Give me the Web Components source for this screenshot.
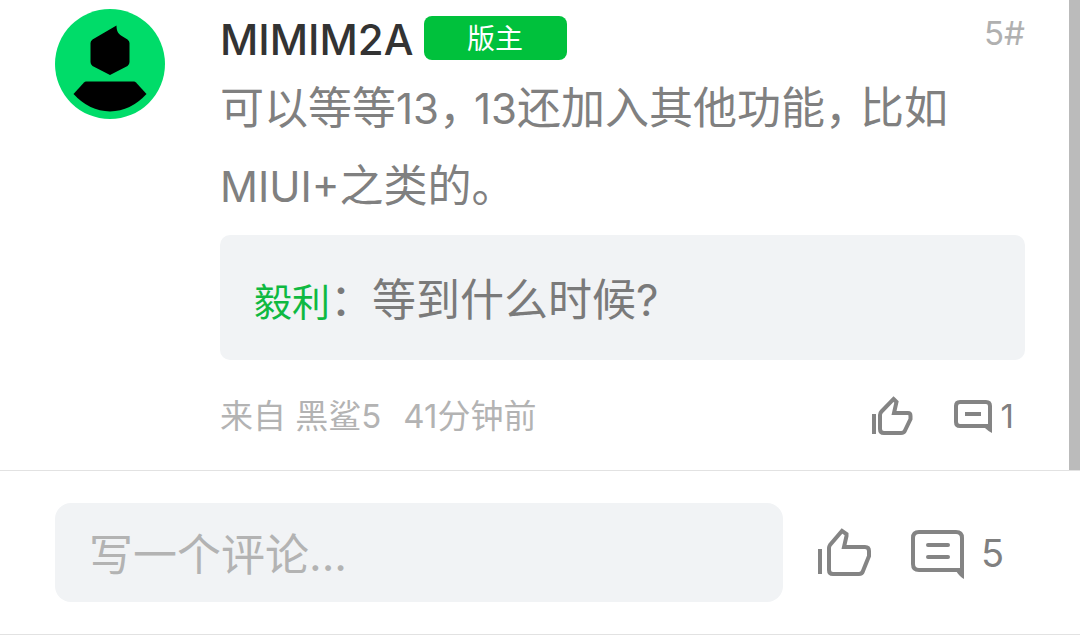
<!DOCTYPE html>
<html lang="zh-CN">
<head>
<meta charset="utf-8">
<meta name="viewport" content="width=device-width, initial-scale=1">
<title>评论</title>
<style>
html,body{margin:0;background:#fff}
body{font-family:Inter,"Noto Sans CJK SC",sans-serif;color:#808080}
</style>
</head>
<body>
<thread-page>
  <comment-item author="MIMIM2A" role-name="版主" floor="5#">
    可以等等<latin-text>13</latin-text><cjk-comma>，</cjk-comma><latin-text>13</latin-text>还加入其他功能<cjk-comma>，</cjk-comma>比如<latin-text>MIUI+</latin-text>之类的。
    <quote-box slot="quote" author="毅利">等到什么时候?</quote-box>
    <comment-meta slot="meta" device="来自 黑鲨5" time="41分钟前" replies="1"></comment-meta>
  </comment-item>
  <reply-bar slot="footer" count="5"></reply-bar>
</thread-page>
<script>
class BaseElement extends HTMLElement {
  connectedCallback() {
    if (this.shadowRoot) return;
    this.attachShadow({mode: 'open'}).innerHTML = this.view();
  }
  attr(name) { return this.getAttribute(name) || ''; }
}

customElements.define('latin-text', class extends BaseElement {
  view() { return `<style>:host{display:inline;font-size:42px;line-height:0}</style><slot></slot>`; }
});

// Half-width comma with a little air after it.
customElements.define('cjk-comma', class extends BaseElement {
  view() { return `<style>:host{display:inline;font-feature-settings:"halt";margin-right:13px}</style><slot></slot>`; }
});

customElements.define('thread-page', class extends BaseElement {
  view() { return `
    <style>
      :host{display:block;border-bottom:1px solid #e2e2e2}
      .thread{display:grid;grid-template-columns:minmax(0,1fr) 11px;border-bottom:1px solid #e2e2e2}
      .thumb{background:#bbb}
    </style>
    <main class="thread"><slot></slot><div class="thumb"></div></main>
    <slot name="footer"></slot>`; }
});

customElements.define('user-avatar', class extends BaseElement {
  view() { return `
    <style>:host{display:block;width:110px;height:110px}svg{display:block}</style>
    <svg width="110" height="110" viewBox="0 0 110 110" aria-hidden="true">
      <circle cx="55" cy="55" r="55" fill="#00dc69"/>
      <path d="M61.500 16.500C61.500 21 62.500 24 66 26.500L72.500 30.500Q74.500 32 74.500 34V53Q74.500 55.500 72.500 57L55 66L37.500 57Q35.500 55.500 35.500 53V34Q35.500 32 37.500 30.500Z"/>
      <path d="M31 72.500H79Q80 72.500 81 73.500L91.500 85Q76 102 55 102.500Q34 102 18.500 85L29 73.500Q30 72.500 31 72.500Z"/>
    </svg>`; }
});

customElements.define('comment-item', class extends BaseElement {
  view() { return `
    <style>
      :host{display:grid;grid-template-columns:110px minmax(0,1fr);column-gap:55px;padding:9px 44px 30px 55px}
      header{display:flex;align-items:center;height:58px;margin-bottom:2px;gap:10px}
      h2{margin:0;font-size:42px;line-height:62px;font-weight:500;color:#333;align-self:flex-start}
      .role{width:143px;height:44px;border-radius:8px;background:#00c13c;color:#fff;font-size:28px;line-height:46px;text-align:center}
      .floor{margin-left:auto;font-size:33px;line-height:48px;color:#b0b0b0;align-self:flex-start}
      p{margin:0 0 10px;font-size:44px;line-height:78px}
    </style>
    <user-avatar></user-avatar>
    <article>
      <header><h2>${this.attr('author')}</h2><span class="role">${this.attr('role-name')}</span><span class="floor">${this.attr('floor')}</span></header>
      <p><slot></slot></p>
      <slot name="quote"></slot>
      <slot name="meta"></slot>
    </article>`; }
});

customElements.define('quote-box', class extends BaseElement {
  view() { return `
    <style>
      :host{display:block;padding:35px 34px 30px;border-radius:10px;background:#f1f3f5;color:#7a7a7a;font-size:44px;line-height:60px}
      a{color:#0fb941;text-decoration:none;font-size:38px;line-height:0}
      span{margin-right:-2px}
    </style>
    <a href="#user">${this.attr('author')}</a><span>：</span><slot></slot>`; }
});

customElements.define('icon-like', class extends BaseElement {
  view() { return `
    <style>:host{display:block}svg{display:block;fill:none;stroke:#848484}</style>
    ${this.hasAttribute('large')
      ? `<svg width="54" height="50" viewBox="0 0 54 50" stroke-width="4" aria-hidden="true"><path d="M2 21V46"/><path d="M24 3L28.500 6V8L26 19H47Q51 19 51 23V28L45 43Q44 46 41 46H15Q11 46 11 42V20Q11 18.500 12 17Z"/></svg>`
      : `<svg width="42" height="40" viewBox="0 0 42 40" stroke-width="4" aria-hidden="true"><path d="M3 18V38"/><path d="M22.500 3L25.500 6L23 17H37Q39.500 17 39.500 20V23L34 34.500Q33 37 30 37H13Q9 37 9 33V19Q9 17 10.500 15.500Z"/></svg>`}`; }
});

customElements.define('icon-comment', class extends BaseElement {
  view() { return `
    <style>:host{display:block}svg{display:block;fill:none;stroke:#848484}.tail{fill:#848484;stroke:none}</style>
    ${this.hasAttribute('large')
      ? `<svg width="54" height="52" viewBox="0 -2 54 52" stroke-width="4" aria-hidden="true"><path d="M51 43V9Q51 3 45 3H8Q2 3 2 9V35Q2 41 8 41H49"/><path class="tail" d="M45 39H53V50Q49 48 45 42Z"/><path d="M17 16H37M17 28H37" stroke-linecap="round"/></svg>`
      : `<svg width="40" height="34" viewBox="0 0 40 34" stroke-width="4" aria-hidden="true"><path d="M37 28V7Q37 3 33 3H7Q3 3 3 7V23Q3 27 7 27H36"/><path class="tail" d="M32 26H39V34Q35 32 32 29Z"/><path d="M12 15H28"/></svg>`}`; }
});

const buttonReset = 'button{display:flex;align-items:center;margin:0;padding:0;border:0;background:none;font-family:inherit;color:#808080}';

customElements.define('comment-meta', class extends BaseElement {
  view() { return `
    <style>
      :host{display:flex;align-items:center;height:48px;margin-top:32px;padding-right:11px;font-size:33px;line-height:48px;color:#b3b3b3}
      .time{margin-left:22px}
      .like{margin-left:auto}
      ${buttonReset}
      .reply{margin-left:40px;gap:8px;font-size:33px;line-height:48px}
    </style>
    <span>${this.attr('device')}</span><span class="time">${this.attr('time')}</span>
    <button class="like" aria-label="赞"><icon-like></icon-like></button>
    <button class="reply" aria-label="回复"><icon-comment></icon-comment><span>${this.attr('replies')}</span></button>`; }
});

customElements.define('reply-bar', class extends BaseElement {
  view() { return `
    <style>
      :host{display:flex;align-items:center;padding:32px 76px 32px 55px}
      input{flex:1;min-width:0;box-sizing:border-box;height:99px;margin:0 35px 0 0;padding:4px 34px 0;border:0;border-radius:16px;background:#f1f3f5;font-family:inherit;font-size:44px;color:#333;outline:0}
      input::placeholder{color:#b3b3b3;opacity:1}
      ${buttonReset}
      .comments{margin-left:39px;gap:16px;font-size:38px;line-height:48px}
    </style>
    <input type="text" aria-label="写一个评论" placeholder="写一个评论...">
    <button aria-label="赞"><icon-like large></icon-like></button>
    <button class="comments" aria-label="评论"><icon-comment large></icon-comment><span>${this.attr('count')}</span></button>`; }
});
</script>
</body>
</html>
